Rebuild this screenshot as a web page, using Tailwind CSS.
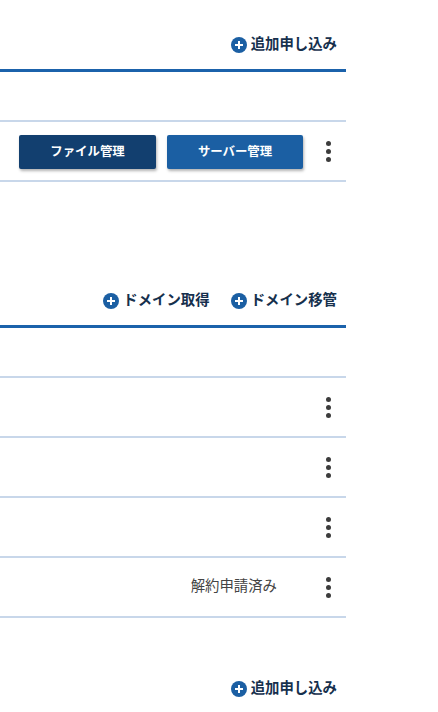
<!DOCTYPE html>
<html lang="ja">
  <head>
    <meta charset="utf-8" />
    <meta name="viewport" content="width=device-width, initial-scale=1" />
    <title>サーバー・ドメイン</title>
    <script src="https://cdn.jsdelivr.net/npm/@tailwindcss/browser@4"></script>
  </head>
  <body class="bg-white h-[712px] overflow-hidden font-['Liberation_Sans','Noto_Sans_CJK_JP',sans-serif] text-[#333]">
    <div class="w-[346px]">
      <!-- Server section -->
      <div class="h-[69px] pt-[35px] pr-[9px] flex justify-end gap-[21px]">
        <a class="flex items-center h-[20px] gap-[4px] text-[14.4px] font-bold text-[#16304d]">
          <svg class="w-[16px] h-[16px]" viewBox="0 0 16 16"><circle cx="8" cy="8" r="8" fill="#1b5fa3" /><path d="M4 8h8M8 4v8" stroke="#fff" stroke-width="2" /></svg>
          追加申し込み
        </a>
      </div>
      <div class="h-[3px] bg-[#1b62ab]"></div>
      <div class="h-[50px] border-b-2 border-[#c8d7ea]"></div>
      <div class="h-[60px] border-b-2 border-[#c8d7ea] flex items-center justify-end">
        <button class="w-[137px] h-[34px] mt-[1px] pt-[1px] mr-[11px] rounded-[2px] bg-[#123f6f] text-white text-[12.4px] font-bold shadow-[1px_2px_3px_rgba(0,0,0,0.3)]">ファイル管理</button>
        <button class="w-[136px] h-[34px] mt-[1px] pt-[1px] rounded-[2px] bg-[#1b5fa3] text-white text-[12.4px] font-bold shadow-[1px_2px_3px_rgba(0,0,0,0.3)]">サーバー管理</button>
        <div class="w-[43px] flex justify-center pl-[7px]">
          <div class="flex flex-col gap-[3px]">
            <span class="w-[5px] h-[5px] rounded-full bg-[#3c3c3c]"></span>
            <span class="w-[5px] h-[5px] rounded-full bg-[#3c3c3c]"></span>
            <span class="w-[5px] h-[5px] rounded-full bg-[#3c3c3c]"></span>
          </div>
        </div>
      </div>

      <!-- Domain section -->
      <div class="h-[143px] pt-[109px] pr-[9px] flex justify-end gap-[21px]">
        <a class="flex items-center h-[20px] gap-[4px] text-[14.4px] font-bold text-[#16304d]">
          <svg class="w-[16px] h-[16px]" viewBox="0 0 16 16"><circle cx="8" cy="8" r="8" fill="#1b5fa3" /><path d="M4 8h8M8 4v8" stroke="#fff" stroke-width="2" /></svg>
          ドメイン取得
        </a>
        <a class="flex items-center h-[20px] gap-[4px] text-[14.4px] font-bold text-[#16304d]">
          <svg class="w-[16px] h-[16px]" viewBox="0 0 16 16"><circle cx="8" cy="8" r="8" fill="#1b5fa3" /><path d="M4 8h8M8 4v8" stroke="#fff" stroke-width="2" /></svg>
          ドメイン移管
        </a>
      </div>
      <div class="h-[3px] bg-[#1b62ab]"></div>
      <div class="h-[50px] border-b-2 border-[#c8d7ea]"></div>
      <div class="h-[60px] border-b-2 border-[#c8d7ea] flex items-center justify-end">
        <div class="w-[43px] flex justify-center pl-[7px]">
          <div class="flex flex-col gap-[3px]">
            <span class="w-[5px] h-[5px] rounded-full bg-[#3c3c3c]"></span>
            <span class="w-[5px] h-[5px] rounded-full bg-[#3c3c3c]"></span>
            <span class="w-[5px] h-[5px] rounded-full bg-[#3c3c3c]"></span>
          </div>
        </div>
      </div>
      <div class="h-[60px] border-b-2 border-[#c8d7ea] flex items-center justify-end">
        <div class="w-[43px] flex justify-center pl-[7px]">
          <div class="flex flex-col gap-[3px]">
            <span class="w-[5px] h-[5px] rounded-full bg-[#3c3c3c]"></span>
            <span class="w-[5px] h-[5px] rounded-full bg-[#3c3c3c]"></span>
            <span class="w-[5px] h-[5px] rounded-full bg-[#3c3c3c]"></span>
          </div>
        </div>
      </div>
      <div class="h-[60px] border-b-2 border-[#c8d7ea] flex items-center justify-end">
        <div class="w-[43px] flex justify-center pl-[7px]">
          <div class="flex flex-col gap-[3px]">
            <span class="w-[5px] h-[5px] rounded-full bg-[#3c3c3c]"></span>
            <span class="w-[5px] h-[5px] rounded-full bg-[#3c3c3c]"></span>
            <span class="w-[5px] h-[5px] rounded-full bg-[#3c3c3c]"></span>
          </div>
        </div>
      </div>
      <div class="h-[60px] border-b-2 border-[#c8d7ea] flex items-center justify-end">
        <span class="mr-[26px] text-[14.4px] text-[#444]">解約申請済み</span>
        <div class="w-[43px] flex justify-center pl-[7px]">
          <div class="flex flex-col gap-[3px]">
            <span class="w-[5px] h-[5px] rounded-full bg-[#3c3c3c]"></span>
            <span class="w-[5px] h-[5px] rounded-full bg-[#3c3c3c]"></span>
            <span class="w-[5px] h-[5px] rounded-full bg-[#3c3c3c]"></span>
          </div>
        </div>
      </div>
      <div class="pt-[61px] pr-[9px] flex justify-end">
        <a class="flex items-center h-[20px] gap-[4px] text-[14.4px] font-bold text-[#16304d]">
          <svg class="w-[16px] h-[16px]" viewBox="0 0 16 16"><circle cx="8" cy="8" r="8" fill="#1b5fa3" /><path d="M4 8h8M8 4v8" stroke="#fff" stroke-width="2" /></svg>
          追加申し込み
        </a>
      </div>
    </div>
  </body>
</html>
